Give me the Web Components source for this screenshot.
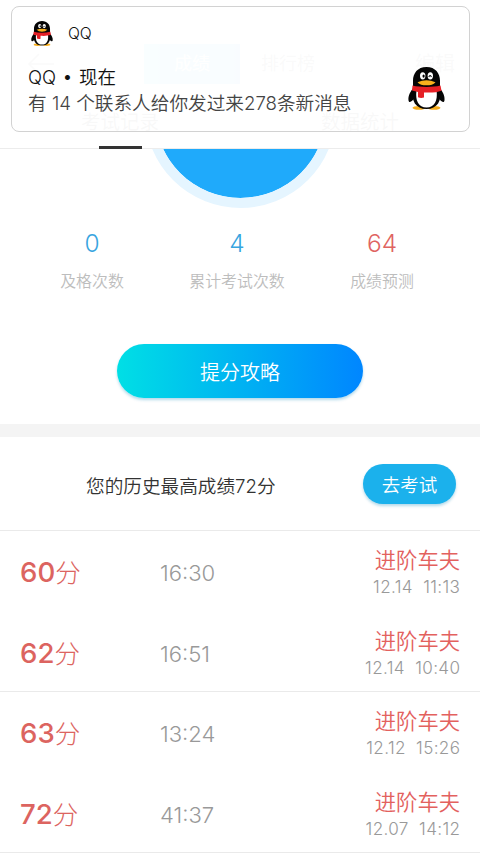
<!DOCTYPE html>
<html lang="zh-CN">
<head>
<meta charset="utf-8">
<title>考试记录</title>
<style>
html,body{margin:0;background:#fff}
body{width:480px;height:853px;overflow:hidden;font-family:Inter,"Noto Sans CJK SC",sans-serif;font-weight:300}
</style>
</head>
<body>
<exam-page></exam-page>
<script>
function define(name, html) {
  const t = document.createElement('template');
  t.innerHTML = html;
  customElements.define(name, class extends HTMLElement {
    constructor() {
      super();
      this.attachShadow({ mode: 'open' }).appendChild(t.content.cloneNode(true));
    }
  });
}

define('qq-penguin', `
<style>:host{display:block;width:37px;height:43px}svg{display:block;width:100%;height:100%}</style>
<svg viewBox="0 0 37 44" preserveAspectRatio="none">
  <ellipse cx="11" cy="41.800" rx="6.500" ry="2" fill="#f5ac1b"/><ellipse cx="26" cy="41.800" rx="6.500" ry="2" fill="#f5ac1b"/>
  <path d="M6 21C2 25 0 30 .5 34c.3 3 2.500 2 5-1zM31 21c4 4 6 9 5.500 13-.3 3-2.500 2-5-1z" fill="#050505"/>
  <path d="M18.500 0C9.500 0 5 6.500 5 14v7C2.500 35 8 43 18.500 43S34.500 35 32 21v-7C32 6.500 27.500 0 18.500 0z" fill="#050505"/>
  <path d="M8.500 24c-1.500 10 2 17.500 10 17.500S30 34 28.500 24z" fill="#fff"/>
  <path d="M4.500 19C13 21 24 21 32.500 19l1 5.200C29 26 23 26.500 16 26v5.200q-3 1-6-.2v-5.500l-6-1.500z" fill="#e51f25"/>
  <ellipse cx="14.700" cy="9" rx="2.700" ry="3.700" fill="#fff"/><ellipse cx="22.300" cy="9" rx="2.700" ry="3.700" fill="#fff"/>
  <ellipse cx="15.600" cy="9.300" rx="1.100" ry="1.700"/><path d="M20.800 10.200q1.300-3 2.600 0" fill="none" stroke="#000" stroke-width="1.100"/>
  <path d="M9.500 15.500q9-4 18 0-3 3.300-9 3.300t-9-3.300z" fill="#f8b01c"/>
</svg>`);

define('notify-card', `
<style>
:host{display:flex;box-sizing:border-box;width:459px;height:126px;border:1.300px solid #d2d2d2;border-radius:8px;background:rgba(255,255,255,.96);padding:12px 24px 0 16px;justify-content:space-between;color:#111}
.app{display:flex;align-items:center;gap:15px;height:28px;margin-left:3px;font-size:15.700px;letter-spacing:-.1px}
.small{width:22px;height:25px}
.title{font-size:18.500px;line-height:24px;margin-top:18px;white-space:pre;font-weight:350;word-spacing:1px}
.msg{font-size:18.650px;line-height:26px;margin-top:1px;color:#444;white-space:nowrap;font-weight:350}
.big{margin-top:48px}
</style>
<div><div class="app"><qq-penguin class="small"></qq-penguin><slot name="app"></slot></div>
<div class="title"><slot name="title"></slot></div><div class="msg"><slot></slot></div></div>
<qq-penguin class="big"></qq-penguin>`);

define('page-header', `
<style>
:host{display:grid;grid-template-rows:44px 40px 64px;position:relative;box-sizing:border-box;height:149px;border-bottom:1px solid #ececec;background:#fff;z-index:1}
.nav{grid-row:2;display:grid;grid-template-columns:144px 96px 96px 144px;font-size:18px;line-height:40px;text-align:center;color:#777;font-weight:400}
.back{padding-left:27px;display:flex;align-items:center}
.on{background:linear-gradient(90deg,#62d6f4,#60b9f5);color:#fff;font-weight:400}
.edit{padding-right:25px;text-align:right;font-size:20px;font-weight:400}
.tabs{grid-row:3;display:grid;grid-template:64px/1fr 1fr;text-align:center;font-size:19.500px;line-height:76px;height:64px;color:#555;font-weight:400}
.tabs div{display:flex;flex-direction:column;align-items:center;position:relative;height:64px}
i{position:absolute;bottom:-1px;width:43px;height:3px;background:#333}
notify-card{position:absolute;left:11px;top:6px;font-weight:300}
</style>
<div class="nav"><span class="back"><svg width="28" height="22" fill="none" stroke="#777" stroke-width="1.500"><path d="M12 1L2 11l10 10M2 11h25"/></svg></span><span class="on">成绩</span><span>排行榜</span><span class="edit">编辑</span></div>
<div class="tabs"><div>考试记录<i></i></div><div>数据统计</div></div>
<notify-card><span slot="app">QQ</span><span slot="title">QQ • 现在</span>有 14 个联系人给你发过来278条新消息</notify-card>`);

define('score-dial', `
<style>:host{display:block;height:59px;overflow:hidden}
div{box-sizing:border-box;width:191px;height:191px;margin:-132px auto 0;border-radius:50%;border:10.500px solid #e5f5ff;background:#1faafb;background-clip:padding-box}</style><div></div>`);

define('stat-item', `
<style>:host{display:flex;flex-direction:column;align-items:center;width:145px;color:#bdbdbd;font-size:15.900px;line-height:24px;font-weight:350}
b{font-weight:350;font-size:24.500px;line-height:30px;margin-bottom:12px;color:var(--num,#38a5df)}</style>
<b><slot name="value"></slot></b><slot></slot>`);

define('pill-button', `
<style>:host{display:flex;align-items:center;justify-content:center;color:#fff;border-radius:40px;font-weight:350;white-space:nowrap}</style><slot></slot>`);

define('record-row', `
<style>
:host{display:grid;grid-template-columns:140px 1fr auto;box-sizing:border-box;height:80.500px;padding:0 20px;color:#999}
.score{color:#dc6460;font-size:25.500px;line-height:82px;white-space:nowrap}
.time{font-size:22.100px;line-height:84px;font-weight:330}
.end{display:flex;flex-direction:column;align-items:flex-end;padding-top:13px}
.lv{font-size:21.300px;line-height:32px;color:#e3615e;font-weight:350}
.date{font-size:17.100px;line-height:22px;white-space:pre;letter-spacing:.35px;margin-right:-.35px;font-weight:330}
::slotted(b){font-size:27.600px;font-weight:450}
</style>
<div class="score"><slot name="score"></slot>分</div><div class="time"><slot name="time"></slot></div>
<div class="end"><div class="lv">进阶车夫</div><div class="date"><slot></slot></div></div>`);

define('exam-page', `
<style>
:host{display:block;width:480px;height:853px;overflow:hidden;background:#fff}
.stats{display:flex;justify-content:center;padding:20px 0 0;margin-left:-6px}
.guide{width:246px;height:54px;margin:50px auto 26px;font-size:20px;background:linear-gradient(90deg,#00dfe5,#0086ff);box-shadow:0 2px 3px #0784b94d}
.gap{height:13px;background:#f4f4f4}
.best{display:flex;align-items:center;justify-content:space-between;box-sizing:border-box;height:94px;padding:1px 24px 0 86px;border-bottom:1px solid #eaeaea;font-size:18.650px;color:#333;font-weight:350}
.go{width:93px;height:40px;font-size:18.500px;background:#1bb1ec;box-shadow:0 2px 3px #0784b94d}
.group{border-bottom:1px solid #eaeaea;height:160px}
</style>
<page-header></page-header>
<score-dial></score-dial>
<div class="stats">
<stat-item><span slot="value">0</span>及格次数</stat-item>
<stat-item><span slot="value">4</span>累计考试次数</stat-item>
<stat-item style="--num:#df6462"><span slot="value">64</span>成绩预测</stat-item>
</div>
<pill-button class="guide">提分攻略</pill-button>
<div class="gap"></div>
<div class="best"><span>您的历史最高成绩72分</span><pill-button class="go">去考试</pill-button></div>
<div class="group">
<record-row><b slot="score">60</b><span slot="time">16:30</span>12.14  11:13</record-row>
<record-row><b slot="score">62</b><span slot="time">16:51</span>12.14  10:40</record-row>
</div>
<div class="group">
<record-row><b slot="score">63</b><span slot="time">13:24</span>12.12  15:26</record-row>
<record-row><b slot="score">72</b><span slot="time">41:37</span>12.07  14:12</record-row>
</div>`);
</script>
</body>
</html>
